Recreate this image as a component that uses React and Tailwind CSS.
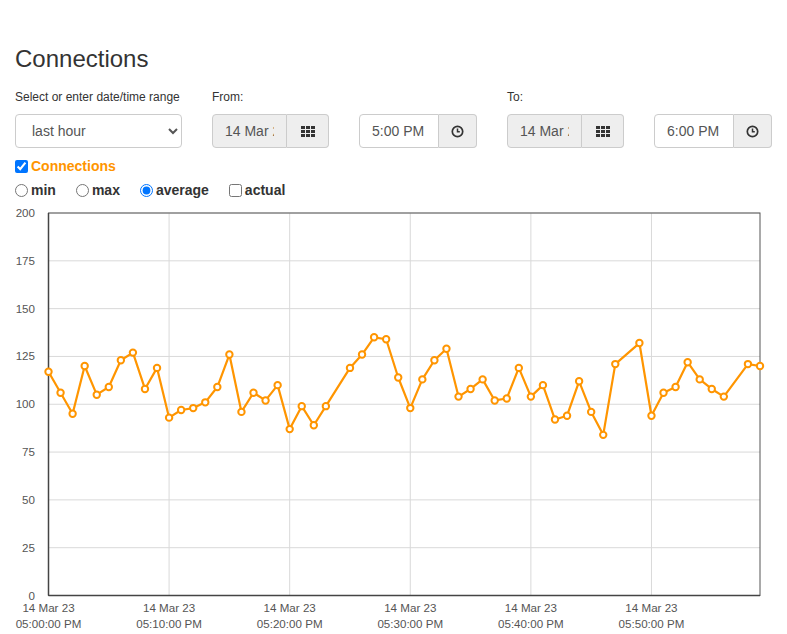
import { useState } from 'react'

const font = { fontFamily: '"Liberation Sans", Arial, sans-serif' }

// connection counts, one per minute from 05:00 PM (null = no sample)
const samples = [
  117, 106, 95, 120, 105, 109, 123, 127, 108, 119, 93, 97, 98, 101, 109, 126, 96, 106, 102, 110,
  87, 99, 89, 99, null, 119, 126, 135, 134, 114, 98, 113, 123, 129, 104, 108, 113, 102, 103, 119,
  104, 110, 92, 94, 112, 96, 84, 121, null, 132, 94, 106, 109, 122, 113, 108, 104, null, 121, 120,
]

const LEFT = 48.5
const RIGHT = 760
const TOP = 9
const BOTTOM = 391.5
const xOf = (m) => LEFT + (m * (RIGHT - LEFT)) / 59
const yOf = (v) => BOTTOM - (v * (BOTTOM - TOP)) / 200

function GridIcon() {
  const cells = []
  for (let r = 0; r < 3; r++)
    for (let c = 0; c < 3; c++)
      cells.push(<rect key={`${r}-${c}`} x={c * 5} y={r * 4} width="4" height="3" />)
  return (
    <svg width="14" height="11" viewBox="0 0 14 11" fill="#333" aria-hidden>
      {cells}
    </svg>
  )
}

function ClockIcon() {
  return (
    <svg width="13" height="13" viewBox="0 0 13 13" fill="none" stroke="#333" aria-hidden>
      <circle cx="6.5" cy="6.5" r="5.2" strokeWidth="1.7" />
      <path d="M6.5 3.6V6.7H8.8" strokeWidth="1.5" />
    </svg>
  )
}

function DateGroup({ value }) {
  return (
    <div className="flex h-[34px] w-[117px]">
      <input
        readOnly
        value={value}
        className="w-[75px] min-w-0 rounded-l-[4px] border border-[#ccc] bg-[#eee] px-3 text-[14px] text-[#555] outline-none"
        style={font}
      />
      <button
        type="button"
        className="flex w-[42px] items-center justify-center rounded-r-[4px] border border-l-0 border-[#ccc] bg-[#eee]"
      >
        <GridIcon />
      </button>
    </div>
  )
}

function TimeGroup({ value }) {
  return (
    <div className="flex h-[34px] w-[118px]">
      <input
        readOnly
        value={value}
        className="w-[80px] min-w-0 rounded-l-[4px] border border-[#ccc] bg-white px-3 text-[14px] text-[#555] outline-none"
        style={font}
      />
      <button
        type="button"
        className="flex w-[38px] items-center justify-center rounded-r-[4px] border border-l-0 border-[#ccc] bg-[#eee]"
      >
        <ClockIcon />
      </button>
    </div>
  )
}

function Chart() {
  const pts = samples
    .map((v, m) => (v == null ? null : [xOf(m), yOf(v)]))
    .filter(Boolean)
  const yTicks = [0, 25, 50, 75, 100, 125, 150, 175, 200]
  const xTicks = ['05:00:00 PM', '05:10:00 PM', '05:20:00 PM', '05:30:00 PM', '05:40:00 PM', '05:50:00 PM']

  return (
    <svg width="787" height="430" viewBox="0 0 787 430" className="mt-1 block" style={font}>
      {yTicks.map((t) => (
        <g key={t}>
          <line x1={LEFT} x2={RIGHT} y1={yOf(t)} y2={yOf(t)} stroke="#d9d9d9" strokeWidth="1" />
          <text x="35" y={yOf(t) + 4} textAnchor="end" fontSize="11.6" fill="#555">
            {t}
          </text>
        </g>
      ))}
      {xTicks.map((t, i) => {
        const x = xOf(i * 10)
        return (
          <g key={t}>
            <line x1={x} x2={x} y1={TOP} y2={BOTTOM} stroke="#d9d9d9" strokeWidth="1" />
            <text x={x} y="407.5" textAnchor="middle" fontSize="11.6" fill="#555">
              14 Mar 23
            </text>
            <text x={x} y="424" textAnchor="middle" fontSize="11.6" fill="#555">
              {t}
            </text>
          </g>
        )
      })}
      <rect x={LEFT} y={TOP} width={RIGHT - LEFT} height={BOTTOM - TOP} fill="none" stroke="#555" strokeWidth="1" />
      <line x1={LEFT} x2={LEFT} y1={TOP} y2={BOTTOM} stroke="#444" strokeWidth="1.5" />
      <line x1={LEFT} x2={RIGHT} y1={BOTTOM} y2={BOTTOM} stroke="#444" strokeWidth="1.5" />
      <polyline
        points={pts.map((p) => p.join(',')).join(' ')}
        fill="none"
        stroke="#ff9500"
        strokeWidth="2.2"
        strokeLinejoin="round"
      />
      {pts.map(([x, y], i) => (
        <circle key={i} cx={x} cy={y} r="3.2" fill="#fff" stroke="#ff9500" strokeWidth="2" />
      ))}
    </svg>
  )
}

export default function App() {
  const [range, setRange] = useState('hour')
  const [mode, setMode] = useState('average')
  const [actual, setActual] = useState(false)
  const [show, setShow] = useState(true)

  return (
    <div className="min-h-screen bg-white text-[#333]" style={font}>
      <div className="px-[15px] pt-[46px]">
        <h2 className="text-[24px] font-normal leading-[26px]">Connections</h2>

        <div className="mt-[17px] flex items-end gap-[30px]">
          <div className="flex flex-col">
            <label className="mb-2 h-[17px] text-[12px] leading-[17px]">Select or enter date/time range</label>
            <select
              value={range}
              onChange={(e) => setRange(e.target.value)}
              className="h-[34px] w-[167px] rounded-[4px] border border-[#ccc] bg-white px-3 text-[14px] text-[#555]"
              style={font}
            >
              <option value="hour">last hour</option>
              <option value="day">last day</option>
              <option value="week">last week</option>
            </select>
          </div>
          <div className="flex flex-col">
            <label className="mb-2 h-[17px] text-[12px] leading-[17px]">From:</label>
            <DateGroup value="14 Mar 2023" />
          </div>
          <TimeGroup value="5:00 PM" />
          <div className="flex flex-col">
            <label className="mb-2 h-[17px] text-[12px] leading-[17px]">To:</label>
            <DateGroup value="14 Mar 2023" />
          </div>
          <TimeGroup value="6:00 PM" />
        </div>

        <label className="mt-2 flex h-5 items-center">
          <input
            type="checkbox"
            checked={show}
            onChange={(e) => setShow(e.target.checked)}
            className="m-0 mr-[3px] h-[13px] w-[13px] accent-[#0075ff]"
          />
          <span className="text-[14px] font-bold text-[#ff9500]">Connections</span>
        </label>

        <div className="mt-1 flex h-5 items-center text-[14px] font-bold">
          {['min', 'max', 'average'].map((m) => (
            <label key={m} className="mr-5 flex items-center">
              <input
                type="radio"
                name="mode"
                checked={mode === m}
                onChange={() => setMode(m)}
                className="m-0 mr-[3px] h-[13px] w-[13px] accent-[#0075ff]"
              />
              {m}
            </label>
          ))}
          <label className="flex items-center">
            <input
              type="checkbox"
              checked={actual}
              onChange={(e) => setActual(e.target.checked)}
              className="m-0 mr-[3px] h-[13px] w-[13px] accent-[#0075ff]"
            />
            actual
          </label>
        </div>
      </div>
      <Chart />
    </div>
  )
}
